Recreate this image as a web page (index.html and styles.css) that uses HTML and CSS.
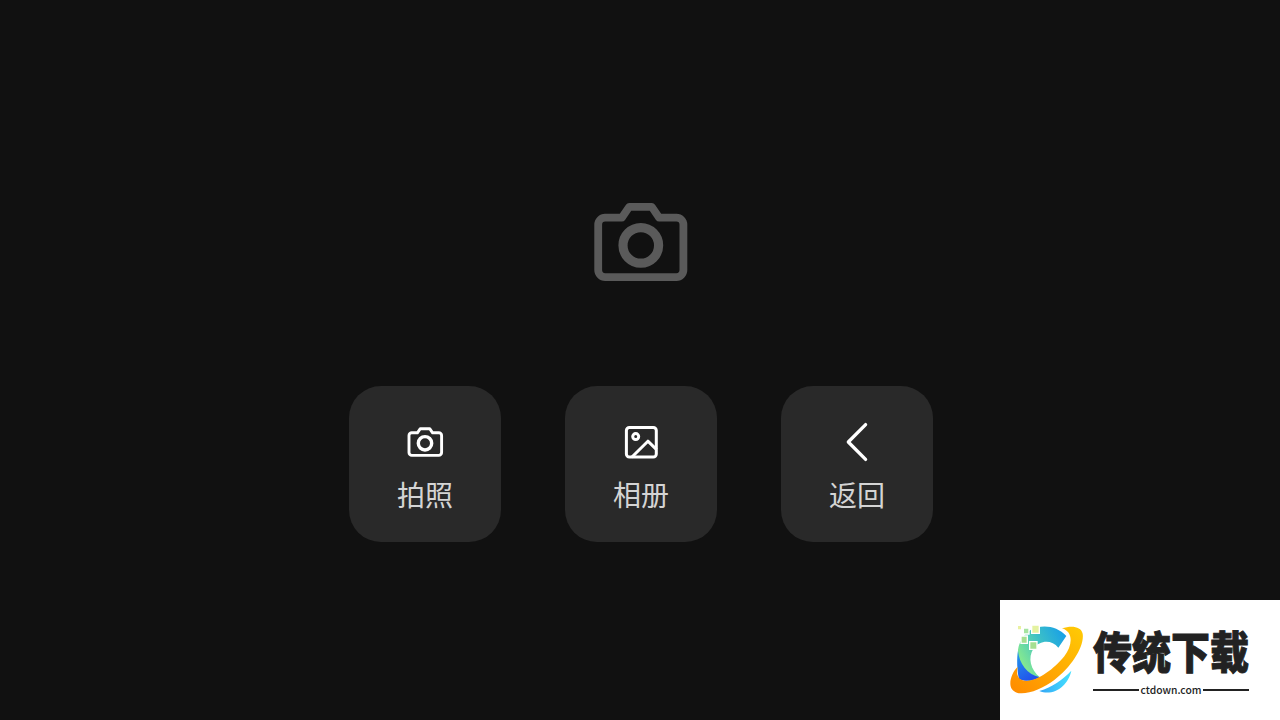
FILE: index.html
```html
<!DOCTYPE html>
<html lang="zh-CN">
<head>
<meta charset="utf-8">
<title>拍照</title>
<link rel="stylesheet" href="styles.css">
</head>
<body>
<main class="screen">
  <svg class="hero" viewBox="0 0 96 80" fill="none" stroke="currentColor">
    <path stroke-width="7.8" stroke-linejoin="round" d="M12.9 15.7H29.8L37.2 4.9H59.8L67.2 15.7H84.4A7 7 0 0 1 91.4 22.7V68.1A7 7 0 0 1 84.4 75.1H13.2A7 7 0 0 1 6.2 68.1V22.7A7 7 0 0 1 13.2 15.7Z"/>
    <circle cx="48.8" cy="43.4" r="17.8" stroke-width="9.2"/>
  </svg>
  <nav class="actions">
    <button class="action">
      <svg class="icon" viewBox="0 0 40 40" fill="none" stroke="currentColor">
        <path stroke-width="2.9" stroke-linejoin="round" d="M6.6 10.8H12.4L15.3 6.7H24.7L27.6 10.8H33.8A2.8 2.8 0 0 1 36.6 13.6V30.6A2.8 2.8 0 0 1 33.8 33.4H6.8A2.8 2.8 0 0 1 4 30.6V13.6A2.8 2.8 0 0 1 6.8 10.8Z"/>
        <circle cx="20" cy="21.3" r="6.7" stroke-width="3.4"/>
      </svg>
      <span class="label">拍照</span>
    </button>
    <button class="action">
      <svg class="icon" viewBox="0 0 40 40" fill="none" stroke="currentColor" stroke-width="3">
        <rect x="5.4" y="5.4" width="29.9" height="29.7" rx="3"/>
        <circle cx="14.7" cy="14.6" r="3"/>
        <path stroke-linejoin="round" d="M10.7 35.2L26.9 19.2L35.6 27.6"/>
      </svg>
      <span class="label">相册</span>
    </button>
    <button class="action">
      <svg class="icon" viewBox="0 0 40 40" fill="none" stroke="currentColor">
        <path stroke-width="3.3" stroke-linecap="round" stroke-linejoin="round" d="M28.6 2.6L11.3 20L28.6 37.4"/>
      </svg>
      <span class="label">返回</span>
    </button>
  </nav>
</main>
<aside class="brand">
  <svg class="emblem" viewBox="0 0 258 252">
    <defs>
      <linearGradient id="ring" x1="0" y1="1" x2="1" y2="0"><stop offset="0" stop-color="#ff8a00"/><stop offset="1" stop-color="#ffcb05"/></linearGradient>
      <linearGradient id="arc" x1="0" y1=".6" x2="1" y2="0"><stop offset="0" stop-color="#8aec8c"/><stop offset=".5" stop-color="#3bbfc8"/><stop offset="1" stop-color="#129aed"/></linearGradient>
      <linearGradient id="tail" x1="0" y1="0" x2="1" y2="0"><stop offset="0" stop-color="#34a5f5"/><stop offset="1" stop-color="#45e1ff"/></linearGradient>
      <linearGradient id="blue" x1="0" y1="0" x2=".5" y2="1"><stop offset="0" stop-color="#249cea"/><stop offset="1" stop-color="#2153ec"/></linearGradient>
    </defs>
    <path fill="url(#arc)" d="M80 36C112 18 158 22 187 54L163 89C143 64 108 66 89 91C70 119 80 157 108 178L76 190C48 170 40 133 42 95C46 72 58 48 80 36Z"/>
    <path fill="url(#blue)" d="M42 98C46 137 69 168 107 178C86 191 59 191 45 183C39 158 38 119 42 98Z"/>
    <path fill="url(#tail)" d="M202 158C193 202 149 237 106 219C145 207 177 184 202 158Z"/>
    <path fill="url(#ring)" d="M174 31C203 22 231 25 236 47C242 84 203 147 151 186C107 219 43 241 24 214C12 196 23 164 41 146C36 169 42 183 56 187C90 198 148 156 181 115C204 84 211 43 174 31Z"/>
    <g fill="#a6df91" stroke="#fff" stroke-width="4">
      <path fill="#e4f2a0" d="M83 21h23v25H83z"/>
      <path fill="#a5e4a0" d="M58 30h17v18H58z"/>
      <path d="M51 54h19v22H51zM77 71h22v23H77z"/>
      <path fill="#e9f1a1" d="M40 22h13v14H40z"/>
    </g>
  </svg>
  <div class="wordmark">
    <div class="name">传统下载</div>
    <div class="site">ctdown.com</div>
  </div>
</aside>
</body>
</html>
```
FILE: styles.css
```css
body {
  margin: 0;
  background: #111;
  font-family: "Noto Sans CJK SC", sans-serif;
}
.screen {
  box-sizing: border-box;
  height: 720px;
  padding: 202px 0 0 2px;
  display: flex;
  flex-direction: column;
  align-items: center;
  gap: 104px;
  overflow: hidden;
}
.hero {
  width: 96px;
  height: 80px;
  margin-right: 2px;
  color: #5a5a5a;
}
.actions {
  display: flex;
  gap: 64px;
}
.action {
  box-sizing: border-box;
  width: 152px;
  height: 156px;
  padding: 36px 0 0;
  border: 0;
  border-radius: 32px;
  background: #292929;
  color: #fff;
  font-family: inherit;
  display: flex;
  flex-direction: column;
  align-items: center;
  gap: 12px;
}
.icon {
  width: 40px;
  height: 40px;
}
.label {
  font-size: 28px;
  line-height: 40px;
  color: #d4d4d4;
}
.brand {
  position: absolute;
  right: 0;
  bottom: 0;
  box-sizing: border-box;
  width: 280px;
  height: 120px;
  padding: 18px 0 0 4px;
  display: flex;
  gap: 3px;
  background: #fff;
  color: #222;
}
.emblem {
  width: 86px;
  height: 84px;
}
.wordmark {
  width: 156px;
}
.name {
  height: 64px;
  font-size: 39px;
  font-weight: 900;
  line-height: 64px;
  white-space: nowrap;
  transform: scaleY(1.14);
  -webkit-text-stroke: 0.8px #222;
}
.site {
  display: flex;
  align-items: center;
  gap: 2px;
  height: 14px;
  padding-top: 1px;
  font-size: 10.3px;
  font-weight: 500;
  line-height: 12px;
}
.site::before,
.site::after {
  content: "";
  flex: 1;
  height: 2px;
  background: #222;
}
```
